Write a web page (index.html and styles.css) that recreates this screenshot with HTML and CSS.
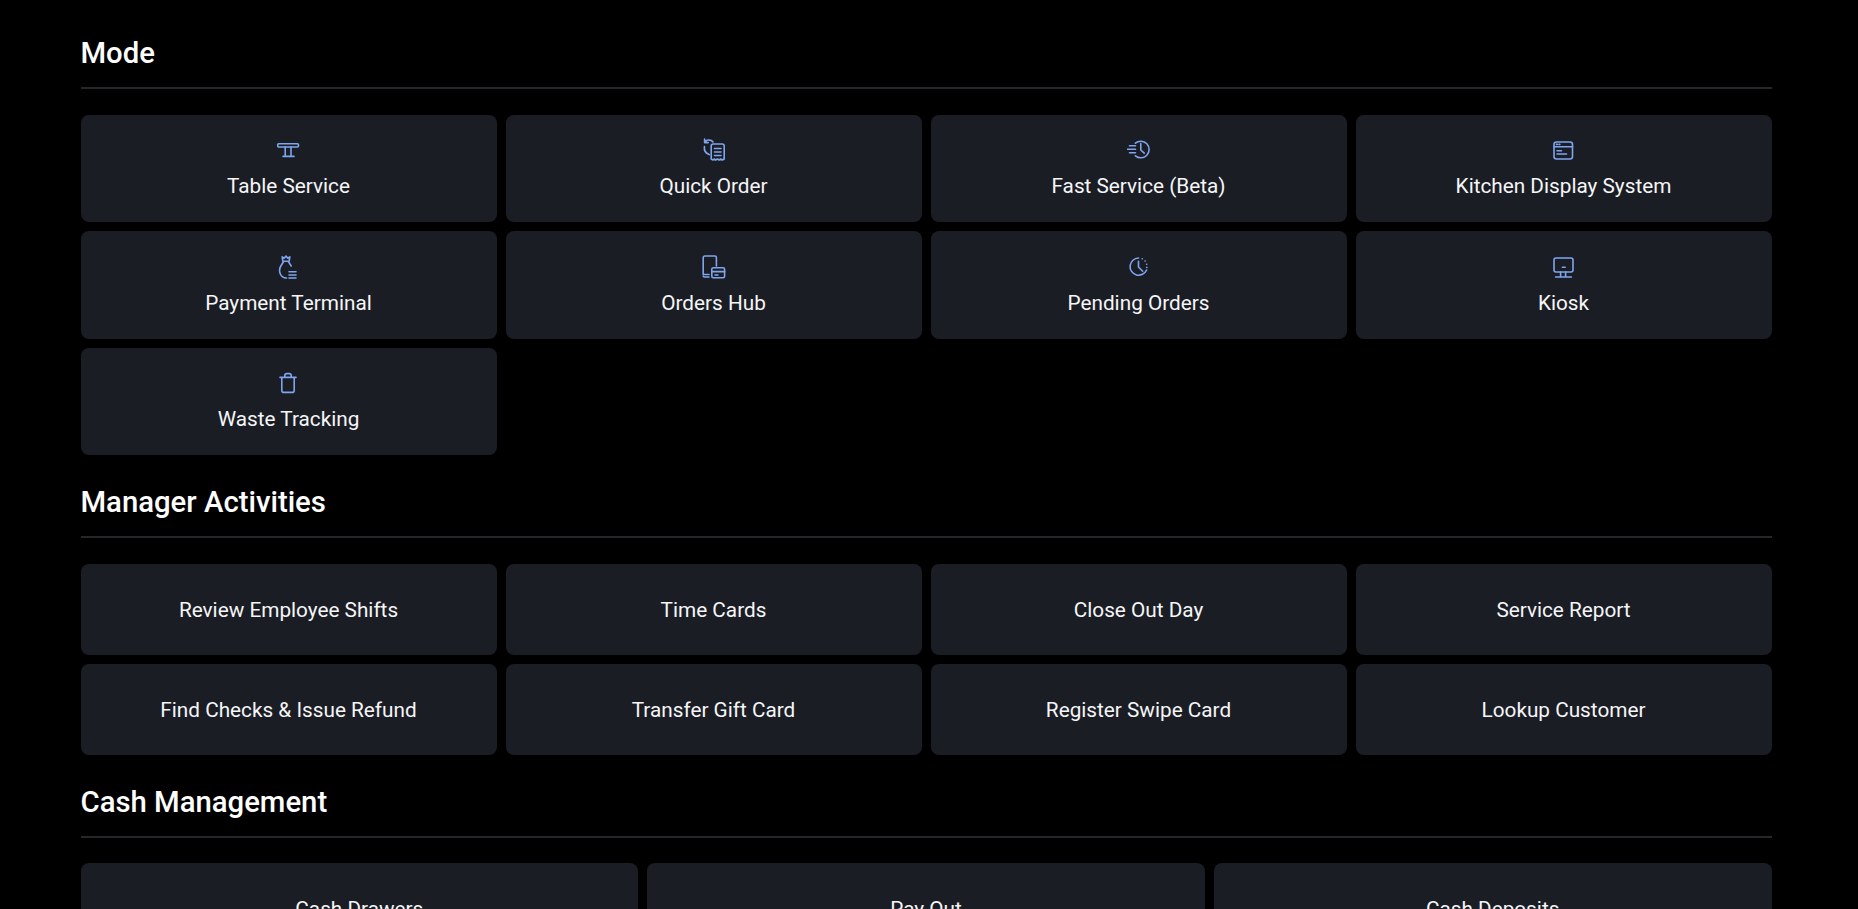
FILE: index.html
```html
<!DOCTYPE html>
<html lang="en">
<head>
    <meta charset="UTF-8">
    <meta name="viewport" content="width=device-width, initial-scale=1.0">
    <title>Functions</title>
    <link rel="stylesheet" href="styles.css">
</head>
<body>
    <main class="page">
        <section class="section">
            <h2 class="section-title">Mode</h2>
            <div class="grid grid-4">
                <a class="tile tile-icon">
                    <svg class="icon" viewBox="0 0 24 24"><rect x="0.6" y="5.8" width="21" height="3.2" rx="1.4"/><path d="M8.2 9v9M14 9v9M6 18.4h11"/></svg>
                    <span>Table Service</span>
                </a>
                <a class="tile tile-icon">
                    <svg class="icon" viewBox="0 0 24 24"><path d="M9.2 21V8a2 2 0 0 1 2-2h9a2 2 0 0 1 2 2v13l-1.8 1-1.6-1-1.7 1-1.7-1-1.7 1-1.6-1-1.1 1z"/><path d="M12.5 10.5h6.5M12.5 14h6.5M12.5 17.5h6.5M11 3.9A5.6 5.6 0 0 0 3.4 3.4M2.6 1v3.6h3.6M2.4 8.5A7.6 7.6 0 0 0 7.2 16.6"/></svg>
                    <span>Quick Order</span>
                </a>
                <a class="tile tile-icon">
                    <svg class="icon" viewBox="0 0 24 24"><path d="M8.4 5.2A8.3 8.3 0 1 1 8.4 17.8M13.8 5.5V12l3.4 3.2M2.5 7.8h6M0.5 11.2h8M2.5 14.8h6"/></svg>
                    <span>Fast Service (Beta)</span>
                </a>
                <a class="tile tile-icon">
                    <svg class="icon" viewBox="0 0 24 24"><rect x="2" y="4" width="18.5" height="17" rx="2.5"/><path d="M2 8.8h18.5M4.5 6.4h.8M7 6.4h.8M5 12.8h4.5M5 16h9.5"/></svg>
                    <span>Kitchen Display System</span>
                </a>
                <a class="tile tile-icon">
                    <svg class="icon" viewBox="0 0 24 24"><path d="M5.8 6.2 5.2 1.8l2 1.4L9 1l1.8 2.2 2-1.4-.6 4.4zM6.5 6.8 3.8 11C1.2 15.6 3 23 9.5 23M11.5 6.8l2.7 4.2M12 16.8h7M12 20h7M12 23h7"/></svg>
                    <span>Payment Terminal</span>
                </a>
                <a class="tile tile-icon">
                    <svg class="icon" viewBox="0 0 24 24"><path d="M7 19.5H1.2V2.6A1.6 1.6 0 0 1 2.8 1h10a1.6 1.6 0 0 1 1.6 1.6V11"/><path d="M1.2 21.2A1.6 1.6 0 0 0 2.8 22H7"/><rect x="9.8" y="12.8" width="12.8" height="10" rx="1.5"/><path d="M9.8 16.6h12.8M13 20h3"/></svg>
                    <span>Orders Hub</span>
                </a>
                <a class="tile tile-icon">
                    <svg class="icon" viewBox="0 0 24 24"><path d="M11.5 3A8.6 8.6 0 1 0 19.6 15M11.5 6.4V12l4.2 4.2"/><path d="M15.2 3.8h.1M18 6h.1M19.6 9.2h.1M19.8 12.4h.1"/></svg>
                    <span>Pending Orders</span>
                </a>
                <a class="tile tile-icon">
                    <svg class="icon" viewBox="0 0 24 24"><rect x="2" y="3" width="19" height="14" rx="2"/><path d="M8.6 17v5M13.6 17v5M3.6 22h15.8M10.4 12.2h2.8"/></svg>
                    <span>Kiosk</span>
                </a>
                <a class="tile tile-icon">
                    <svg class="icon" viewBox="0 0 24 24"><path d="M3 6.4h16M4.8 6.4v13a2 2 0 0 0 2 2h8.4a2 2 0 0 0 2-2v-13M7.8 6.4V4.6a2 2 0 0 1 2-2h2.4a2 2 0 0 1 2 2v1.8"/></svg>
                    <span>Waste Tracking</span>
                </a>
            </div>
        </section>

        <section class="section">
            <h2 class="section-title">Manager Activities</h2>
            <div class="grid grid-4">
                <a class="tile">Review Employee Shifts</a>
                <a class="tile">Time Cards</a>
                <a class="tile">Close Out Day</a>
                <a class="tile">Service Report</a>
                <a class="tile">Find Checks &amp; Issue Refund</a>
                <a class="tile">Transfer Gift Card</a>
                <a class="tile">Register Swipe Card</a>
                <a class="tile">Lookup Customer</a>
            </div>
        </section>

        <section class="section">
            <h2 class="section-title">Cash Management</h2>
            <div class="grid grid-3">
                <a class="tile">Cash Drawers</a>
                <a class="tile">Pay Out</a>
                <a class="tile">Cash Deposits</a>
            </div>
        </section>
    </main>
</body>
</html>
```

FILE: styles.css
```css
html, body {
    margin: 0;
    height: 100%;
    overflow: hidden;
    background: #000;
}

body {
    font-family: Roboto, "Liberation Sans", sans-serif;
    color: #f5f6f7;
}

.page {
    padding: 6px 86.5px 0 80.5px;
}

.section-title {
    margin: 0 0 25.5px;
    padding: 29px 0 16px;
    border-bottom: 2px solid #26272a;
    font-size: 29.3px;
    line-height: 36px;
    font-weight: 500;
    color: #fff;
}

.grid {
    display: grid;
    gap: 9px;
}

.grid-4 { grid-template-columns: repeat(4, 1fr); }
.grid-3 { grid-template-columns: repeat(3, 1fr); }

.tile {
    display: flex;
    align-items: center;
    justify-content: center;
    box-sizing: border-box;
    height: 91px;
    padding-top: 1px;
    background: #1b1d25;
    border-radius: 8px;
    font-size: 20.75px;
    line-height: 28px;
}

.tile-icon {
    flex-direction: column;
    gap: 10px;
    height: 107.5px;
    padding-top: 1.5px;
}

.icon {
    width: 24px;
    height: 24px;
    fill: none;
    stroke: #7fa5ee;
    stroke-width: 1.6;
    stroke-linecap: round;
    stroke-linejoin: round;
}
```
